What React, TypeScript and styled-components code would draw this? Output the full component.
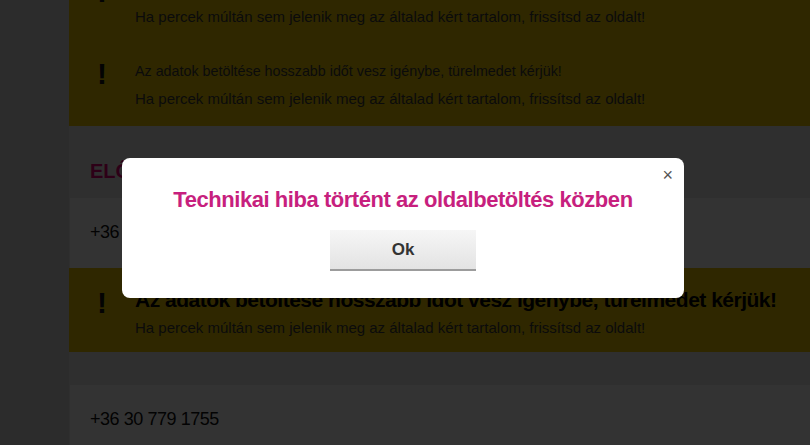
import React from "react";
import styled, { createGlobalStyle } from "styled-components";

const FONT = `"Liberation Sans", Arial, sans-serif`;

const GlobalStyle = createGlobalStyle`
  html, body {
    margin: 0;
    padding: 0;
    height: 100%;
    overflow: hidden;
    background: #dcdcdc;
    font-family: ${FONT};
  }
`;

type Notice = { title: string; text: string };

const LOADING: Notice = {
  title: "Az adatok betöltése hosszabb időt vesz igénybe, türelmedet kérjük!",
  text: "Ha percek múltán sem jelenik meg az általad kért tartalom, frissítsd az oldalt!",
};

const App = () => {
  return (
    <>
      <GlobalStyle />
      <Page>
        <Gutter />
        <Content>
          <NoticeBlock $bottom={14}>
            {[LOADING, LOADING].map((n, i) => (
              <NoticeItem key={i}>
                <Bang>!</Bang>
                <NoticeLines>
                  <NoticeTitle>{n.title}</NoticeTitle>
                  <NoticeText>{n.text}</NoticeText>
                </NoticeLines>
              </NoticeItem>
            ))}
          </NoticeBlock>

          <SectionHeading>ELŐFIZETÉSEID</SectionHeading>
          <NumberBox>+36 30 779 1755</NumberBox>

          <NoticeBlock $bottom={11}>
            <NoticeItem>
              <Bang>!</Bang>
              <NoticeLines>
                <NoticeTitle $big>{LOADING.title}</NoticeTitle>
                <NoticeText>{LOADING.text}</NoticeText>
              </NoticeLines>
            </NoticeItem>
          </NoticeBlock>

          <Spacer />
          <NumberBox>+36 30 779 1755</NumberBox>
        </Content>
      </Page>

      <Overlay>
        <Modal>
          <CloseButton aria-label="Bezárás">×</CloseButton>
          <ModalTitle>Technikai hiba történt az oldalbetöltés közben</ModalTitle>
          <OkButton>Ok</OkButton>
        </Modal>
      </Overlay>
    </>
  );
};

const Page = styled.div`
  display: flex;
  min-height: 100vh;
`;

const Gutter = styled.div`
  width: 69px;
  flex-shrink: 0;
  background: #dcdcdc;
`;

const Content = styled.div`
  flex: 1;
  min-width: 0;
  display: flex;
  flex-direction: column;
  background: #ececec;
  /* page is scrolled down a bit */
  margin-top: -43px;
`;

const NoticeBlock = styled.div<{ $bottom: number }>`
  background: #e8c400;
  padding: 18px 0 ${(p) => p.$bottom}px;
  display: flex;
  flex-direction: column;
  gap: 27px;
`;

const NoticeItem = styled.div`
  display: grid;
  grid-template-columns: 66px 1fr;
  align-items: start;
`;

const Bang = styled.div`
  font-weight: 700;
  font-size: 30px;
  line-height: 30px;
  color: #111;
  text-align: center;
  padding-top: 2px;
`;

const NoticeLines = styled.div`
  display: flex;
  flex-direction: column;
  min-width: 0;
`;

const NoticeTitle = styled.div<{ $big?: boolean }>`
  font-size: ${(p) => (p.$big ? "21px" : "14.3px")};
  font-weight: ${(p) => (p.$big ? 700 : 400)};
  letter-spacing: ${(p) => (p.$big ? "-0.5px" : "0")};
  line-height: 28px;
  color: ${(p) => (p.$big ? "#000" : "#3a3a3a")};
  white-space: nowrap;
`;

const NoticeText = styled.div`
  font-size: 15px;
  line-height: 27px;
  color: #3a3a3a;
  white-space: nowrap;
`;

const SectionHeading = styled.h2`
  margin: 0;
  padding: 34px 0 16px 21px;
  font-size: 20px;
  line-height: 22px;
  font-weight: 700;
  color: #e20074;
`;

const NumberBox = styled.div`
  height: 70px;
  box-sizing: border-box;
  margin-left: 1px;
  padding: 23px 0 0 20px;
  background: #ffffff;
  font-size: 18px;
  letter-spacing: -0.45px;
  line-height: 22px;
  color: #111;
`;

const Spacer = styled.div`
  height: 33px;
`;

const Overlay = styled.div`
  position: fixed;
  inset: 0;
  background: rgba(0, 0, 0, 0.8);
  display: flex;
  justify-content: center;
  align-items: flex-start;
  padding-top: 158px;
`;

const Modal = styled.div`
  position: relative;
  width: 562px;
  height: 140px;
  margin-left: -4px;
  box-sizing: border-box;
  background: #ffffff;
  border-radius: 8px;
  display: flex;
  flex-direction: column;
  align-items: center;
  padding-top: 28px;
`;

const CloseButton = styled.button`
  position: absolute;
  top: 8px;
  right: 11px;
  border: none;
  background: none;
  padding: 0;
  font-family: ${FONT};
  font-size: 18px;
  line-height: 18px;
  color: #555;
  cursor: pointer;
`;

const ModalTitle = styled.h1`
  margin: 0;
  font-size: 22px;
  line-height: 28px;
  font-weight: 700;
  color: #c71f7e;
  letter-spacing: -0.45px;
  white-space: nowrap;
`;

const OkButton = styled.button`
  margin-top: 16px;
  width: 146px;
  height: 41px;
  border: none;
  border-bottom: 2px solid #9c9c9c;
  background: linear-gradient(#f6f6f6, #e3e3e3);
  font-family: ${FONT};
  font-weight: 700;
  font-size: 17px;
  color: #333;
  cursor: pointer;
`;

export default App;
